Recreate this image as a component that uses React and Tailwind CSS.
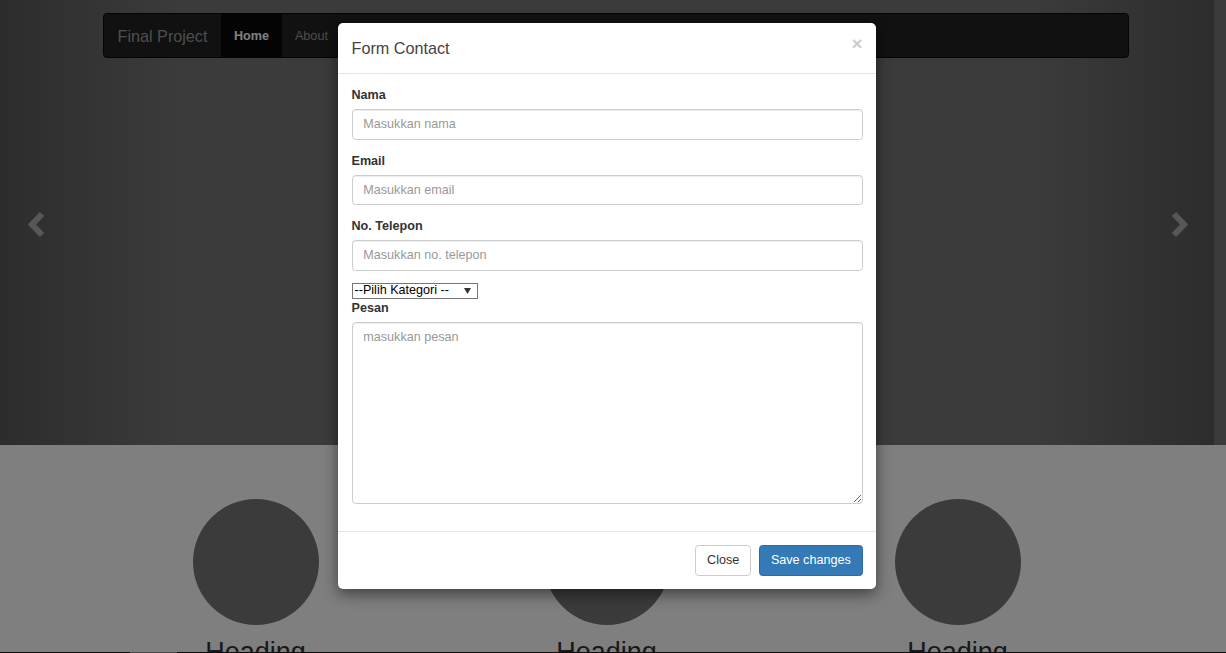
import React from "react";

function Chevron({ dir }) {
  const pts = dir === "left" ? "14,3 4,13.5 14,24" : "4,3 14,13.5 4,24";
  return (
    <svg width="18" height="27" viewBox="0 0 18 27" className="block">
      <polyline
        points={pts}
        fill="none"
        stroke="rgba(255,255,255,0.5)"
        strokeWidth="6"
        strokeLinejoin="miter"
      />
    </svg>
  );
}

function Field({ label, placeholder }) {
  return (
    <div className="mb-[12px]">
      <label className="block mb-[5px] text-[12.6px] leading-[18px] font-bold text-[#333]">
        {label}
      </label>
      <input
        type="text"
        placeholder={placeholder}
        className="block w-full h-[30.5px] px-[10.8px] text-[12.6px] text-[#555] border border-[#ccc] rounded-[3.6px] shadow-[inset_0_1px_1px_rgba(0,0,0,0.075)] placeholder:text-[#999] outline-none"
      />
    </div>
  );
}

export default function App() {
  return (
    <div className="relative w-[1226px] h-[653px] overflow-hidden bg-white font-['Liberation_Sans',Arial,sans-serif]">
      {/* carousel */}
      <div className="relative h-[445px] bg-[#777]">
        <div className="absolute inset-y-0 left-0 w-[184px] bg-linear-to-r from-black/25 to-transparent" />
        <div className="absolute inset-y-0 right-[12px] w-[184px] bg-linear-to-l from-black/25 to-transparent" />
        <div className="absolute left-[28px] top-[211px]">
          <Chevron dir="left" />
        </div>
        <div className="absolute left-[1170px] top-[211px]">
          <Chevron dir="right" />
        </div>
      </div>

      {/* navbar */}
      <div className="absolute left-[103px] top-[13px] w-[1026px] h-[45px] flex bg-[#222] border border-[#080808] rounded-[4px] overflow-hidden">
        <div className="flex items-center px-[13.5px] pt-[1px] text-[16.2px] text-[#9d9d9d]">Final Project</div>
        <div className="flex items-center px-[13px] pt-[1px] bg-[#080808] text-[12.6px] font-bold text-white">Home</div>
        <div className="flex items-center px-[13px] pt-[1px] text-[12.6px] text-[#9d9d9d]">About</div>
      </div>

      {/* marketing */}
      <div className="ml-[80px] w-[1053px] grid grid-cols-3 pt-[54px]">
        {[0, 1, 2].map((i) => (
          <div key={i} className="flex flex-col items-center">
            <div className="w-[126px] h-[126px] rounded-full bg-[#777]" />
            <h2 className="mt-[13px] text-[27px] leading-[1.1] font-medium text-[#333]">Heading</h2>
          </div>
        ))}
      </div>

      {/* backdrop */}
      <div className="absolute inset-0 bg-black/50" />
      <div className="absolute left-0 bottom-0 w-full h-px bg-[#0d0d0d]">
        <div className="ml-[130px] w-[47px] h-px bg-[#4a4a4a]" />
      </div>

      {/* modal */}
      <div className="absolute left-[338px] top-[23px] w-[538px] bg-white rounded-[5px] shadow-[0_5px_15px_rgba(0,0,0,0.5)]">
        <div className="flex items-start justify-between px-[13.5px] py-[13.5px] border-b border-[#e5e5e5]">
          <h4 className="text-[16.2px] leading-[23px] text-[#444]">Form Contact</h4>
          <button className="-mt-[2px] text-[18.9px] leading-none font-bold text-black opacity-20">×</button>
        </div>

        <div className="px-[13.5px] pt-[12px] pb-[13.5px]">
          <Field label="Nama" placeholder="Masukkan nama" />
          <Field label="Email" placeholder="Masukkan email" />
          <Field label="No. Telepon" placeholder="Masukkan no. telepon" />

          <div className="mt-[3.5px] w-[126px] h-[16px] flex items-center justify-between border border-[#767676] pl-[2px] pr-[6px] text-[12.6px] leading-none text-black">
            <span>--Pilih Kategori --</span>
            <svg width="7" height="6" viewBox="0 0 7 6">
              <polygon points="0,0 7,0 3.5,6" fill="#333" />
            </svg>
          </div>

          <div className="mb-[13.5px]">
            <label className="block mb-[5.5px] text-[12.6px] leading-[18px] font-bold text-[#333]">Pesan</label>
            <textarea
              placeholder="masukkan pesan"
              className="block w-full h-[182px] px-[10.8px] py-[5.4px] text-[12.6px] leading-[18px] text-[#555] border border-[#ccc] rounded-[3.6px] shadow-[inset_0_1px_1px_rgba(0,0,0,0.075)] placeholder:text-[#999] outline-none resize-y"
            />
          </div>
        </div>

        <div className="flex justify-end gap-[8px] px-[13.5px] py-[13px] border-t border-[#e5e5e5]">
          <button className="h-[30.5px] px-[10.8px] text-[12.6px] text-[#333] bg-white border border-[#ccc] rounded-[3.6px]">
            Close
          </button>
          <button className="h-[30.5px] px-[10.8px] text-[12.6px] text-white bg-[#337ab7] border border-[#2e6da4] rounded-[3.6px]">
            Save changes
          </button>
        </div>
      </div>
    </div>
  );
}
